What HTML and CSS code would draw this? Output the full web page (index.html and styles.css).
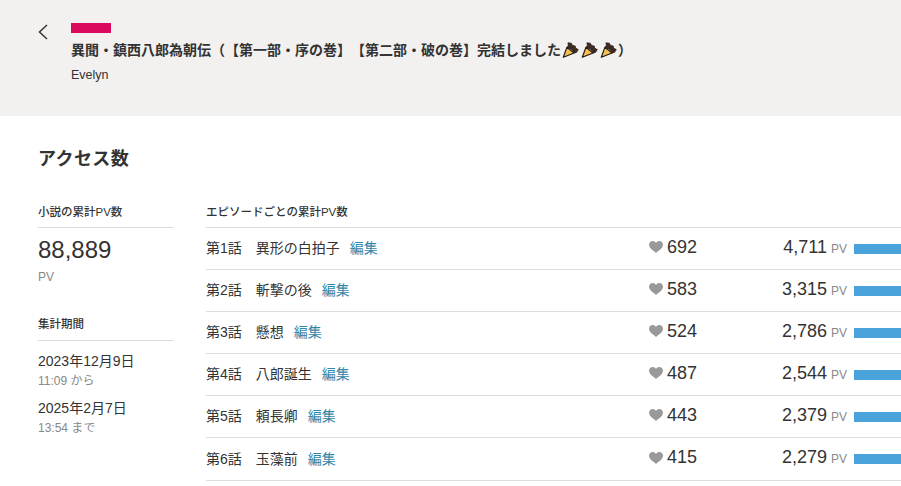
FILE: index.html
```html
<!DOCTYPE html>
<html lang="ja">
<head>
    <meta charset="UTF-8">
    <meta name="viewport" content="width=device-width, initial-scale=1.0">
    <title>アクセス数</title>
    <link rel="stylesheet" href="styles.css">
</head>
<body>
    <svg class="svg-defs" width="0" height="0">
        <symbol id="carrot" viewBox="0 0 16 16">
            <path d="M0.8 15.2 L4.4 5.4 L11.6 11 Z" fill="#f6bf52" stroke="#221a14" stroke-width="1.2" stroke-linejoin="round"/>
            <path d="M4.4 5.4 L5.8 3.4 L5.4 0.8 L8.8 1.2 L10.2 3.6 L12.8 4 L13 6 L15.8 7.6 L14 10.4 L11.6 11 L9.4 7.6 Z" fill="#3d2c24" stroke="#221a14" stroke-width="0.7" stroke-linejoin="round"/>
        </symbol>
        <symbol id="heart" viewBox="0 0 14 12">
            <path d="M7 12 C5 10 0 7.5 0 3.8 C0 1.6 1.7 0 3.7 0 C5.2 0 6.4 .8 7 2 C7.6 .8 8.8 0 10.3 0 C12.3 0 14 1.6 14 3.8 C14 7.5 9 10 7 12 Z" fill="#999"/>
        </symbol>
    </svg>

    <header class="work-header">
        <a class="back-link" href="#" aria-label="戻る">
            <svg width="10" height="16" viewBox="0 0 10 16"><path d="M9 1 L1.5 8 L9 15" fill="none" stroke="#333" stroke-width="1.5"/></svg>
        </a>
        <div class="work-info">
            <div class="work-label"></div>
            <h1 class="work-title">異聞・鎮西八郎為朝伝（【第一部・序の巻】【第二部・破の巻】完結しました<svg class="emoji"><use href="#carrot"/></svg><svg class="emoji"><use href="#carrot"/></svg><svg class="emoji"><use href="#carrot"/></svg>）</h1>
            <div class="work-author">Evelyn</div>
        </div>
    </header>

    <main class="content">
        <h2 class="page-title">アクセス数</h2>
        <div class="columns">
            <aside class="side">
                <h3 class="section-title">小説の累計PV数</h3>
                <div class="total">88,889</div>
                <div class="total-unit">PV</div>

                <h3 class="section-title period-title">集計期間</h3>
                <div class="period">
                    <div class="date">2023年12月9日</div>
                    <div class="time">11:09 から</div>
                </div>
                <div class="period">
                    <div class="date">2025年2月7日</div>
                    <div class="time">13:54 まで</div>
                </div>
            </aside>

            <section class="episodes">
                <h3 class="section-title">エピソードごとの累計PV数</h3>
                <div class="episode">
                    <div class="episode-name">第1話　異形の白拍子<a class="edit" href="#">編集</a></div>
                    <div class="likes"><svg class="heart"><use href="#heart"/></svg>692</div>
                    <div class="count">4,711</div>
                    <div class="unit">PV</div>
                    <div class="bar"></div>
                </div>
                <div class="episode">
                    <div class="episode-name">第2話　斬撃の後<a class="edit" href="#">編集</a></div>
                    <div class="likes"><svg class="heart"><use href="#heart"/></svg>583</div>
                    <div class="count">3,315</div>
                    <div class="unit">PV</div>
                    <div class="bar"></div>
                </div>
                <div class="episode">
                    <div class="episode-name">第3話　懸想<a class="edit" href="#">編集</a></div>
                    <div class="likes"><svg class="heart"><use href="#heart"/></svg>524</div>
                    <div class="count">2,786</div>
                    <div class="unit">PV</div>
                    <div class="bar"></div>
                </div>
                <div class="episode">
                    <div class="episode-name">第4話　八郎誕生<a class="edit" href="#">編集</a></div>
                    <div class="likes"><svg class="heart"><use href="#heart"/></svg>487</div>
                    <div class="count">2,544</div>
                    <div class="unit">PV</div>
                    <div class="bar"></div>
                </div>
                <div class="episode">
                    <div class="episode-name">第5話　頼長卿<a class="edit" href="#">編集</a></div>
                    <div class="likes"><svg class="heart"><use href="#heart"/></svg>443</div>
                    <div class="count">2,379</div>
                    <div class="unit">PV</div>
                    <div class="bar"></div>
                </div>
                <div class="episode">
                    <div class="episode-name">第6話　玉藻前<a class="edit" href="#">編集</a></div>
                    <div class="likes"><svg class="heart"><use href="#heart"/></svg>415</div>
                    <div class="count">2,279</div>
                    <div class="unit">PV</div>
                    <div class="bar"></div>
                </div>
            </section>
        </div>
    </main>
</body>
</html>
```

FILE: styles.css
```css
:root {
    --text: #333333;
    --muted: #888888;
    --line: #dddddd;
}

html, body {
    height: 486px;
    overflow: hidden;
}

body {
    margin: 0;
    font-family: "Liberation Sans", "Noto Sans CJK JP", sans-serif;
    color: var(--text);
    background-color: #ffffff;
    text-spacing-trim: space-all;
}

.svg-defs {
    position: absolute;
}

.work-header {
    height: 116px;
    box-sizing: border-box;
    padding: 23px 0 0 38px;
    background-color: #f2f1f0;
    display: flex;
}

.back-link {
    width: 33px;
    height: 18px;
    padding-top: 1px;
    display: block;
}

.work-label {
    width: 40px;
    height: 10px;
    background-color: #dc0a5f;
}

.work-title {
    margin: 7px 0 0;
    font-size: 14px;
    line-height: 20px;
    font-weight: bold;
    white-space: nowrap;
}

.emoji {
    width: 19px;
    height: 16px;
    vertical-align: -3px;
}

.work-author {
    margin-top: 7px;
    font-size: 12.5px;
    line-height: 16px;
}

.content {
    padding: 31px 0 0 38px;
}

.page-title {
    margin: 0;
    font-size: 18px;
    line-height: 24px;
    font-weight: bold;
    letter-spacing: 0.4px;
}

.columns {
    margin-top: 32px;
    display: flex;
    gap: 32px;
}

.side {
    width: 136px;
    flex-shrink: 0;
}

.section-title {
    margin: 0;
    height: 24px;
    font-size: 11.5px;
    line-height: 18px;
    font-weight: 500;
    border-bottom: 1px solid var(--line);
}

.total {
    margin-top: 7px;
    font-size: 24px;
    line-height: 30px;
}

.total-unit {
    margin-top: 4px;
    font-size: 12px;
    line-height: 16px;
    color: var(--muted);
}

.period-title {
    margin-top: 30px;
    height: 25px;
}

.period {
    margin-top: 8px;
}

.period-title + .period {
    margin-top: 9px;
}

.date {
    font-size: 14px;
    line-height: 22px;
}

.time {
    margin-top: 1px;
    font-size: 12px;
    line-height: 16px;
    color: var(--muted);
}

.episodes {
    flex: 1;
}

.episode {
    height: 42.1px;
    box-sizing: border-box;
    padding-bottom: 3px;
    border-bottom: 1px solid var(--line);
    display: grid;
    grid-template-columns: 443px 100px 78px 27px 1fr;
    align-items: center;
}

.episode-name {
    font-size: 14px;
}

.edit {
    margin-left: 10px;
    color: #2e87a8;
    text-decoration: none;
}

.likes {
    font-size: 18px;
    display: flex;
    align-items: center;
    gap: 4px;
}

.heart {
    width: 14px;
    height: 12px;
}

.count {
    font-size: 18px;
    text-align: right;
}

.unit {
    padding: 3px 0 0 4px;
    font-size: 12px;
    color: var(--muted);
}

.bar {
    height: 10px;
    margin-top: 3px;
    background-color: #4ba3dc;
}
```
